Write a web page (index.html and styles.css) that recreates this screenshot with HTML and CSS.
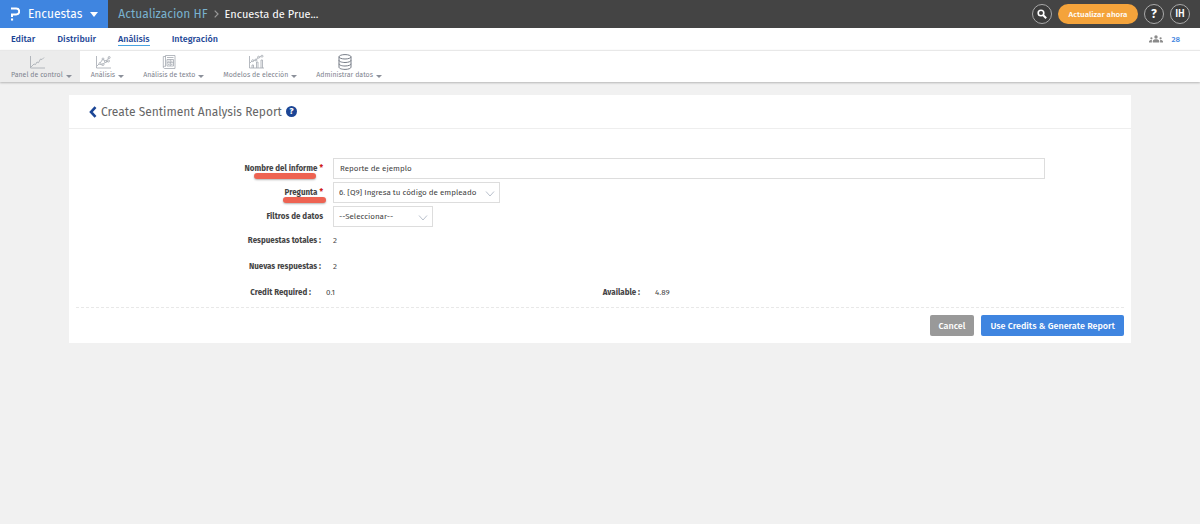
FILE: index.html
```html
<!DOCTYPE html>
<html lang="es">
<head>
  <meta charset="UTF-8">
  <meta name="viewport" content="width=device-width, initial-scale=1.0">
  <title>Create Sentiment Analysis Report</title>
  <link rel="stylesheet" href="styles.css">
</head>
<body>
  <header class="topbar">
    <button class="product" type="button">
      <svg class="logo" width="10" height="14" viewBox="0 0 10 14" fill="none" stroke="#fff" stroke-width="2">
        <path d="M1 1.500h5.200a2.800 2.800 0 0 1 0 6H2v2.600"/>
        <path d="M1 12.500h2.100" stroke-width="2.100"/>
      </svg>
      <span>Encuestas</span>
      <span class="caret caret-big"></span>
    </button>
    <div class="breadcrumb">
      <a href="#">Actualizacion HF</a>
      <svg width="5" height="8" viewBox="0 0 5 8" fill="none" stroke="#999" stroke-width="1.2"><path d="M.7.7 4 4 .7 7.3"/></svg>
      <span>Encuesta de Prue...</span>
    </div>
    <div class="top-actions">
      <button class="round" type="button" aria-label="Buscar">
        <svg width="10" height="10" viewBox="0 0 10 10" fill="none" stroke="#fff" stroke-width="1.6"><circle cx="4" cy="4" r="2.8"/><path d="M6 6l3.2 3.2" stroke-width="2"/></svg>
      </button>
      <button class="upgrade" type="button">Actualizar ahora</button>
      <button class="round help" type="button">?</button>
      <button class="round" type="button">IH</button>
    </div>
  </header>

  <nav class="tabs">
    <a href="#">Editar</a>
    <a href="#">Distribuir</a>
    <a href="#" class="active">Análisis</a>
    <a href="#">Integración</a>
    <a href="#" class="users">
      <svg width="14" height="8" viewBox="0 0 14 8" fill="#8a8a8a">
        <circle cx="7" cy="2" r="1.7"/><path d="M3.8 7.5V6.2C3.8 4.9 5.4 4.3 7 4.3s3.2.6 3.2 1.9v1.3z"/>
        <circle cx="2.4" cy="3.3" r="1.1"/><path d="M0 7.5v-1C0 5.400 1 4.900 2.900 4.900 2.800 5.500 2.900 6 2.900 7.500z"/>
        <circle cx="11.600" cy="3.300" r="1.100"/><path d="M14 7.500v-1c0-1.100-1-1.600-2.900-1.600.1.600 0 1.100 0 2.600z"/>
      </svg>
      <span>28</span>
    </a>
  </nav>

  <div class="toolbar">
    <button type="button" class="tool active">
      <svg class="tool-icon" width="16" height="16" viewBox="0 0 16 16"><path d="M1.500 2v12H16M2 13l3-3 1.500.5L8 8l1.500.7L11.500 5l1.500.5L15 3.500"/></svg>
      <span class="tool-label">Panel de control</span><span class="caret"></span>
    </button>
    <button type="button" class="tool">
      <svg class="tool-icon" width="16" height="16" viewBox="0 0 16 16"><path d="M1.500 2v12H16M2 12l2-2M5.500 8.500l2-3M8.500 5.500l1.500 2M11 7l3-3.500M5.500 10.500l2 .5M8.500 10l2-2M11 8l2-.5"/><circle cx="5" cy="9.500" r="1"/><circle cx="8" cy="5" r="1"/><circle cx="10.500" cy="7.500" r="1"/><circle cx="8" cy="10.500" r="1"/><circle cx="14.200" cy="3.500" r="1"/><circle cx="13.500" cy="7" r="1"/></svg>
      <span class="tool-label">Análisis</span><span class="caret"></span>
    </button>
    <button type="button" class="tool">
      <svg class="tool-icon" width="16" height="16" viewBox="0 0 16 16"><path d="M4.500 1.500H14v13H4c-1 0-1.700-.6-1.700-1.500V2.500h2.200zM4.500 2v10.500M2.300 13c0-.5.7-.7 2.200-.7M6 3.500h6.500M6 5.500h6.500v6.500H6zM9.300 5.500V12M6 8.700h6.500M7 7.200h1.500M10 7.200h1.500M7 10.400h1.500M10 10.400h1.500"/></svg>
      <span class="tool-label">Análisis de texto</span><span class="caret"></span>
    </button>
    <button type="button" class="tool">
      <svg class="tool-icon" width="16" height="16" viewBox="0 0 16 16"><path d="M1.500 2v12H16M4 14v-3h1.500v3M8.500 14V8H10v6M13 14V6h1.500v8M2 9l2-2M5.500 6.500l2-.5M8.500 5.500l1.500-2M11.500 3l1.500-.5"/><circle cx="4.800" cy="6.700" r="1"/><circle cx="8" cy="6" r="1"/><circle cx="10.600" cy="3.200" r="1"/><circle cx="14" cy="2.200" r="1"/></svg>
      <span class="tool-label">Modelos de elección</span><span class="caret"></span>
    </button>
    <button type="button" class="tool">
      <svg class="tool-icon dark" width="16" height="16" viewBox="0 0 16 16"><ellipse cx="8" cy="2.800" rx="6" ry="2.200"/><path d="M2 2.800v10.400c0 1.200 2.700 2.200 6 2.200s6-1 6-2.200V2.800M2 6.300c0 1.200 2.700 2.200 6 2.200s6-1 6-2.200M2 9.800c0 1.200 2.700 2.200 6 2.200s6-1 6-2.200"/></svg>
      <span class="tool-label">Administrar datos</span><span class="caret"></span>
    </button>
  </div>

  <main class="card">
    <div class="card-header">
      <a href="#" class="back" aria-label="Volver">
        <svg width="8" height="12" viewBox="0 0 8 12" fill="none" stroke="#1b4595" stroke-width="2.600"><path d="M6.500 1.200 2 6l4.500 4.800"/></svg>
      </a>
      <h1>Create Sentiment Analysis Report</h1>
      <span class="info">?</span>
    </div>

    <form class="report-form">
      <div class="fields">
        <div class="row">
          <label for="name">Nombre del informe <em>*</em><span class="mark mark-name"></span></label>
          <input id="name" type="text" value="Reporte de ejemplo">
        </div>
        <div class="row">
          <label for="question">Pregunta <em>*</em><span class="mark mark-question"></span></label>
          <div class="select select-question">
            <select id="question"><option>6. [Q9] Ingresa tu código de empleado</option></select>
            <svg class="chevron" width="10" height="6" viewBox="0 0 10 6"><path d="M1 .5l4 4.500L9 .5"/></svg>
          </div>
        </div>
        <div class="row">
          <label for="filter">Filtros de datos</label>
          <div class="select select-filter">
            <select id="filter"><option>--Seleccionar--</option></select>
            <svg class="chevron" width="10" height="6" viewBox="0 0 10 6"><path d="M1 .5l4 4.500L9 .5"/></svg>
          </div>
        </div>
      </div>
      <div class="row info-row">
        <span class="term">Respuestas totales :</span>
        <span>2</span>
      </div>
      <div class="row info-row">
        <span class="term">Nuevas respuestas :</span>
        <span>2</span>
      </div>
      <div class="row credit-row">
        <span class="term">Credit Required :</span>
        <span>0.1</span>
        <span class="term">Available :</span>
        <span>4.89</span>
      </div>
      <div class="actions">
        <button type="button" class="btn btn-cancel">Cancel</button>
        <button type="button" class="btn btn-primary">Use Credits &amp; Generate Report</button>
      </div>
    </form>
  </main>
</body>
</html>
```

FILE: styles.css
```css
* {
  box-sizing: border-box;
}
body {
  margin: 0;
  font-family: "Fira Sans", "Noto Sans", sans-serif;
  font-size: 8px;
  color: #444;
  background: #f1f1f1;
}
button, input, select {
  font: inherit;
  color: inherit;
}
button {
  border: none;
  cursor: pointer;
}
a {
  text-decoration: none;
}

/* top bar */
.topbar {
  display: flex;
  align-items: center;
  height: 28px;
  background: #444;
}
.product {
  display: flex;
  align-items: center;
  gap: 8px;
  height: 28px;
  padding: 0 10px;
  background: #3f85e0;
  color: #fff;
  font-size: 12px;
}
.caret {
  border: 3px solid transparent;
  border-top-color: #8b909a;
  border-bottom: none;
}
.caret-big {
  border-width: 5px 4px 0;
  border-top-color: #fff;
}
.breadcrumb {
  display: flex;
  align-items: center;
  gap: 6px;
  margin-left: 10px;
  color: #fff;
  font-size: 11px;
}
.breadcrumb a {
  color: #79b2cf;
  font-size: 12px;
}
.top-actions {
  display: flex;
  align-items: center;
  gap: 6px;
  margin-left: auto;
  padding-right: 10px;
}
.round {
  display: flex;
  align-items: center;
  justify-content: center;
  width: 20px;
  height: 20px;
  padding: 0;
  border: 1px solid #aaa;
  border-radius: 50%;
  background: #3c3c3c;
  color: #fff;
  font-size: 10px;
  font-weight: 500;
}
.help {
  font-size: 12px;
  font-weight: bold;
}
.upgrade {
  height: 20px;
  padding: 0;
  width: 80px;
  border-radius: 10px;
  background: #f4a33b;
  color: #fff;
  font-weight: 500;
}

/* tabs */
.tabs {
  display: flex;
  align-items: center;
  gap: 22px;
  height: 22px;
  padding: 0 20px 0 11px;
  background: #fff;
  font-size: 9px;
  font-weight: 500;
}
.tabs a {
  color: #1b4595;
  line-height: 11px;
}
.tabs .active {
  box-shadow: 0 1px #4aa3e0;
}
.tabs .users {
  display: flex;
  align-items: center;
  gap: 8px;
  margin-left: auto;
  color: #3f85e0;
  font-size: 8px;
}

/* toolbar */
.toolbar {
  display: flex;
  height: 32px;
  background: #fff;
  border-top: 1px solid #e8e8e8;
  box-shadow: 0 1px 2px rgba(0,0,0,0.25);
}
.tool {
  display: grid;
  grid-template-columns: auto auto;
  justify-items: center;
  align-items: center;
  align-content: center;
  column-gap: 3px;
  padding: 0 8px 0 11px;
  background: none;
  color: #7f858f;
  font-size: 7px;
  line-height: 10px;
}
.tool.active {
  background: #ececec;
}
.tool-icon {
  grid-column: 1;
  fill: none;
  stroke: #a3a8b0;
  stroke-width: 0.8;
}
.tool-icon.dark {
  stroke: #777d87;
  stroke-width: 1;
}
.tool-label {
  grid-column: 1;
}
.tool .caret {
  margin-top: 3px;
}

/* card */
.card {
  margin: 13px 69px;
  background: #fff;
}
.card-header {
  display: flex;
  align-items: center;
  height: 34px;
  padding-left: 20px;
  border-bottom: 1px solid #eee;
}
.back {
  display: flex;
}
h1 {
  margin: 0 4px;
  color: #666;
  font-size: 12px;
  font-weight: normal;
}
.info {
  width: 11px;
  height: 11px;
  border-radius: 50%;
  background: #1b4595;
  color: #fff;
  font-size: 9px;
  font-weight: bold;
  line-height: 11px;
  text-align: center;
}

/* form */
.report-form {
  padding: 29px 7px 7px;
}
.fields {
  display: grid;
  gap: 3px;
}
.row {
  display: grid;
  grid-template-columns: 247px 1fr;
  column-gap: 10px;
  align-items: center;
  padding-right: 79px;
}
.row label, .term {
  position: relative;
  font-weight: bold;
  text-align: right;
}
.row em {
  color: #d0201a;
  font-style: normal;
}
.row input {
  width: 100%;
  height: 21px;
  padding: 0 6px;
  border: 1px solid #ddd;
  background: #fff;
}
.select {
  position: relative;
}
.select-question {
  width: 167px;
}
.select-filter {
  width: 100px;
}
.select select {
  width: 100%;
  height: 21px;
  padding: 0 5px;
  border: 1px solid #ddd;
  border-radius: 0;
  background: #fff;
  appearance: none;
}
.chevron {
  position: absolute;
  top: 9px;
  right: 5px;
  fill: none;
  stroke: #b9c0cc;
  pointer-events: none;
}
.mark {
  position: absolute;
  height: 6px;
  border-radius: 3px;
  background: #ee6352;
  box-shadow: 0 1px 2px rgba(0,0,0,0.3);
}
.mark-name {
  top: 9px;
  right: 7px;
  width: 62px;
}
.mark-question {
  top: 9px;
  right: -3px;
  width: 43px;
}
.info-row {
  height: 26px;
}
.info-row .term {
  padding-right: 2px;
}
.credit-row {
  grid-template-columns: 235px 245px 54px 1fr;
  column-gap: 15px;
  height: 26px;
}
.actions {
  display: flex;
  justify-content: flex-end;
  gap: 7px;
  margin-top: 2px;
  padding-top: 7px;
  border-top: 1px dashed #e8e8e8;
}
.btn {
  height: 21px;
  padding: 0 9px;
  border-radius: 2px;
  color: #fff;
  font-size: 9px;
  font-weight: 500;
}
.btn-cancel {
  background: #999;
}
.btn-primary {
  background: #3f85e0;
}
```
